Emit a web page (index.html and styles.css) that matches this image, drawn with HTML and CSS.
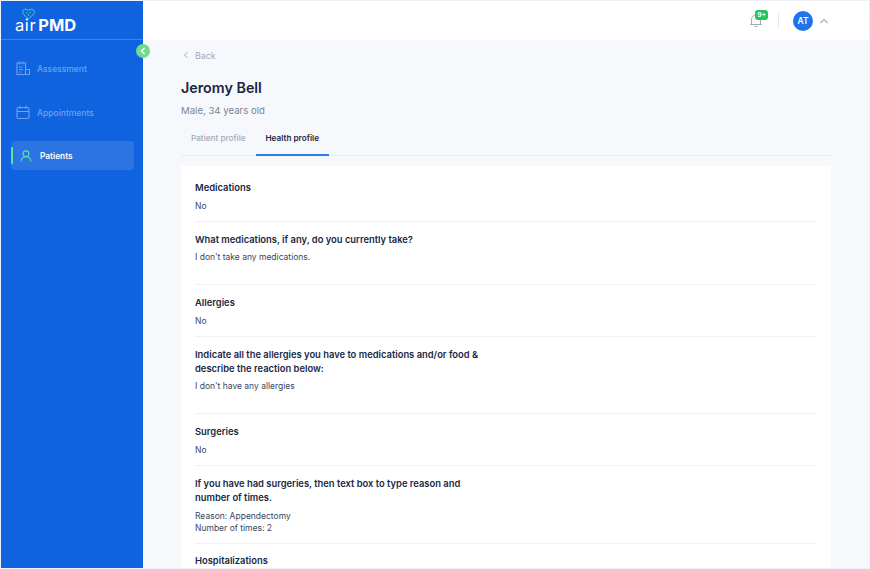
FILE: index.html
```html
<!doctype html>
<html lang="en">

<head>
    <meta charset="UTF-8" />
    <title>airPMD - Patient health profile</title>
    <link rel="stylesheet" href="styles.css">
</head>

<body>
    <div class="app">
        <!-- Sidebar -->
        <aside class="sidebar">
            <div class="logo">
                <svg class="logo-heart" width="13" height="12" viewBox="0 0 14 12" fill="none" stroke="#4fd8c4" stroke-width="1">
                    <path d="M7 11.2 2 6.6C.4 5 .4 3 1.500 1.800 2.800.5 5 .4 7 2.200 9 .4 11.200.5 12.500 1.800 13.600 3 13.600 5 12 6.600Z" />
                    <path d="M4.500 4.200 6 5.200M9.500 4.200 8 5.200M7 6.200V8" />
                </svg>
                <div class="logo-text"><span class="logo-air">air</span><span class="logo-pmd">PMD</span></div>
            </div>
            <button class="collapse-btn" type="button">
                <svg width="6" height="8" viewBox="0 0 6 8" fill="none" stroke="#fff" stroke-width="1.5">
                    <path d="M4.500 1 1.500 4l3 3" />
                </svg>
            </button>
            <nav class="nav">
                <a class="nav-item" href="#">
                    <svg class="nav-icon" width="14" height="15" viewBox="0 0 14 15" fill="none" stroke="currentColor" stroke-width="1.1">
                        <path d="M9.500 13.500H1V2h8.500v11.500" />
                        <path d="M3.500.5v3M7 .5v3M3.200 6h3.600M3.200 8.500h3.600M3.200 11h2" />
                        <path d="M9.500 8.500h4v5h-4" />
                    </svg>
                    <span>Assessment</span>
                </a>
                <a class="nav-item" href="#">
                    <svg class="nav-icon" width="14" height="15" viewBox="0 0 14 15" fill="none" stroke="currentColor" stroke-width="1.1">
                        <rect x="1" y="2.500" width="12" height="11" rx="1.500" />
                        <path d="M1 6.500h12M4 .5v3.500M10 .5v3.500" />
                    </svg>
                    <span>Appointments</span>
                </a>
                <a class="nav-item active" href="#">
                    <svg class="nav-icon" width="12" height="12" viewBox="0 0 12 12" fill="none" stroke="#5fe3a1" stroke-width="1.100">
                        <circle cx="6" cy="3.800" r="2.900" />
                        <path d="M1 11.500c.4-2.800 2.300-4.700 5-4.700s4.600 1.900 5 4.700" />
                    </svg>
                    <span>Patients</span>
                </a>
            </nav>
        </aside>

        <div class="main">
            <!-- Header -->
            <header class="topbar">
                <div class="bell">
                    <svg width="14" height="15" viewBox="0 0 14 15" fill="none" stroke="#a3abb8" stroke-width="1">
                        <path d="M2.500 11V6.500a4.500 4.500 0 0 1 9 0V11M1 11.500h12M5.500 13.500h3" />
                    </svg>
                    <span class="badge">9+</span>
                </div>
                <span class="divider"></span>
                <span class="avatar">AT</span>
                <svg class="caret" width="10" height="6" viewBox="0 0 10 6" fill="none" stroke="#a3abb8" stroke-width="1.200">
                    <path d="M1.500 5 5 1.500 8.500 5" />
                </svg>
            </header>

            <!-- Content -->
            <main class="content">
                <a class="back" href="#">
                    <svg width="6" height="8" viewBox="0 0 6 8" fill="none" stroke="#a3abb8" stroke-width="1">
                        <path d="M4.500 1 1.500 4l3 3" />
                    </svg>
                    Back
                </a>
                <h1 class="patient-name">Jeromy Bell</h1>
                <div class="patient-meta">Male, 34 years old</div>

                <div class="tabs">
                    <a class="tab" href="#">Patient profile</a>
                    <a class="tab active" href="#">Health profile</a>
                </div>

                <section class="card">
                    <div class="block">
                        <h3 class="block-title">Medications</h3>
                        <p class="block-text">No</p>
                    </div>
                    <div class="block block-long">
                        <h3 class="block-title">What medications, if any, do you currently take?</h3>
                        <p class="block-text">I don't take any medications.</p>
                    </div>
                    <div class="block">
                        <h3 class="block-title">Allergies</h3>
                        <p class="block-text">No</p>
                    </div>
                    <div class="block block-long">
                        <h3 class="block-title">Indicate all the allergies you have to medications and/or food &amp; describe the reaction below:</h3>
                        <p class="block-text">I don't have any allergies</p>
                    </div>
                    <div class="block">
                        <h3 class="block-title">Surgeries</h3>
                        <p class="block-text">No</p>
                    </div>
                    <div class="block">
                        <h3 class="block-title">If you have had surgeries, then text box to type reason and number of times.</h3>
                        <p class="block-text">Reason: Appendectomy<br>Number of times: 2</p>
                    </div>
                    <div class="block block-last">
                        <h3 class="block-title">Hospitalizations</h3>
                    </div>
                </section>
            </main>
        </div>
    </div>
</body>

</html>
```

FILE: styles.css
```css
html,
body {
    margin: 0;
    height: 100%;
    overflow: hidden;
}

body {
    font-family: 'Inter', 'Liberation Sans', sans-serif;
    background: #edf1f8;
    color: #1a2744;
}

a {
    text-decoration: none;
}

.app {
    display: flex;
    height: 567px;
    margin: 1px;
    background: #f7f8fb;
    overflow: hidden;
}

/* Sidebar */
.sidebar {
    position: relative;
    flex: 0 0 142px;
    background: #0f63de;
}

.logo {
    position: relative;
    height: 38px;
    border-bottom: 1px solid #3f84e6;
}

.logo-heart {
    position: absolute;
    left: 21px;
    top: 7px;
}

.logo-text {
    position: absolute;
    left: 14px;
    top: 14px;
    display: flex;
    gap: 2px;
    color: #fff;
    font-size: 16.5px;
    line-height: 20px;
    white-space: nowrap;
}

.logo-air {
    font-weight: 400;
    letter-spacing: 0.6px;
}

.logo-pmd {
    font-weight: 700;
}

.collapse-btn {
    position: absolute;
    right: -7px;
    top: 43px;
    width: 14px;
    height: 14px;
    padding: 0;
    border: none;
    border-radius: 50%;
    background: #6fdc8c;
    display: flex;
    align-items: center;
    justify-content: center;
}

.nav {
    display: flex;
    flex-direction: column;
    padding: 14px 9px 0 10px;
    gap: 15px;
}

.nav-item {
    display: flex;
    align-items: center;
    height: 29px;
    padding-left: 5px;
    gap: 7px;
    font-size: 8.5px;
    font-weight: 500;
    color: #6ea2ee;
    border-radius: 4px;
}

.nav-icon {
    flex: none;
}

.nav-item.active {
    position: relative;
    margin-top: -1px;
    padding-left: 9px;
    gap: 8px;
    color: #fff;
    font-size: 8.3px;
    font-weight: 600;
    background: #2b74e2;
}

.nav-item.active::before {
    content: "";
    position: absolute;
    left: 0;
    top: 6px;
    width: 2px;
    height: 17px;
    border-radius: 1px;
    background: #5fe3a1;
}

/* Header */
.main {
    flex: 1;
    min-width: 0;
    display: flex;
    flex-direction: column;
}

.topbar {
    flex: 0 0 39px;
    background: #fff;
    display: flex;
    align-items: center;
    justify-content: flex-end;
    padding-right: 40px;
}

.bell {
    position: relative;
    display: flex;
    margin-right: 15px;
}

.badge {
    position: absolute;
    left: 6px;
    top: -3px;
    width: 13px;
    height: 10px;
    border-radius: 3px;
    background: #22c55e;
    color: #fff;
    font-size: 6.5px;
    font-weight: 700;
    line-height: 10px;
    text-align: center;
}

.divider {
    width: 1px;
    height: 15px;
    background: #e5e8ee;
    margin-right: 14px;
}

.avatar {
    width: 20px;
    height: 20px;
    border-radius: 50%;
    background: #1f73ec;
    color: #fff;
    font-size: 8.5px;
    font-weight: 600;
    line-height: 20px;
    text-align: center;
    margin-right: 6px;
}

/* Content */
.content {
    flex: 1;
    min-height: 0;
    padding: 9px 38px 0 38px;
}

.back {
    display: flex;
    align-items: center;
    gap: 6px;
    height: 12px;
    font-size: 8.8px;
    color: #a3abb8;
    margin-left: 2px;
}

.patient-name {
    margin: 17px 0 0;
    font-size: 14.3px;
    line-height: 20px;
    font-weight: 600;
}

.patient-meta {
    margin-top: 6px;
    font-size: 9.6px;
    line-height: 14px;
    color: #7a8498;
}

.tabs {
    display: flex;
    margin-top: 3px;
    border-bottom: 1px solid #e9ecf1;
}

.tab {
    box-sizing: border-box;
    height: 34px;
    line-height: 34px;
    padding: 0 10px;
    font-size: 8.2px;
    font-weight: 500;
    color: #a3abb8;
}

.tab.active {
    height: 35px;
    margin-bottom: -1px;
    color: #1a2744;
    font-weight: 600;
    border-bottom: 2px solid #2b7de9;
}

.card {
    margin-top: 10px;
    background: #fff;
    padding: 4px 15px 0 14px;
}

.block {
    padding: 11px 0 9px;
    border-bottom: 1px solid #f0f2f5;
}

.block-long {
    padding-bottom: 21px;
}

.block-last {
    padding: 10px 0 0;
    border-bottom: none;
}

.block-title {
    max-width: 290px;
    margin: 0;
    font-size: 9.4px;
    line-height: 14px;
    font-weight: 600;
}

.block-text {
    margin: 5px 0 0;
    font-size: 8.5px;
    line-height: 12px;
    color: #39465e;
}

.block-long .block-text {
    margin-top: 4px;
}
```
